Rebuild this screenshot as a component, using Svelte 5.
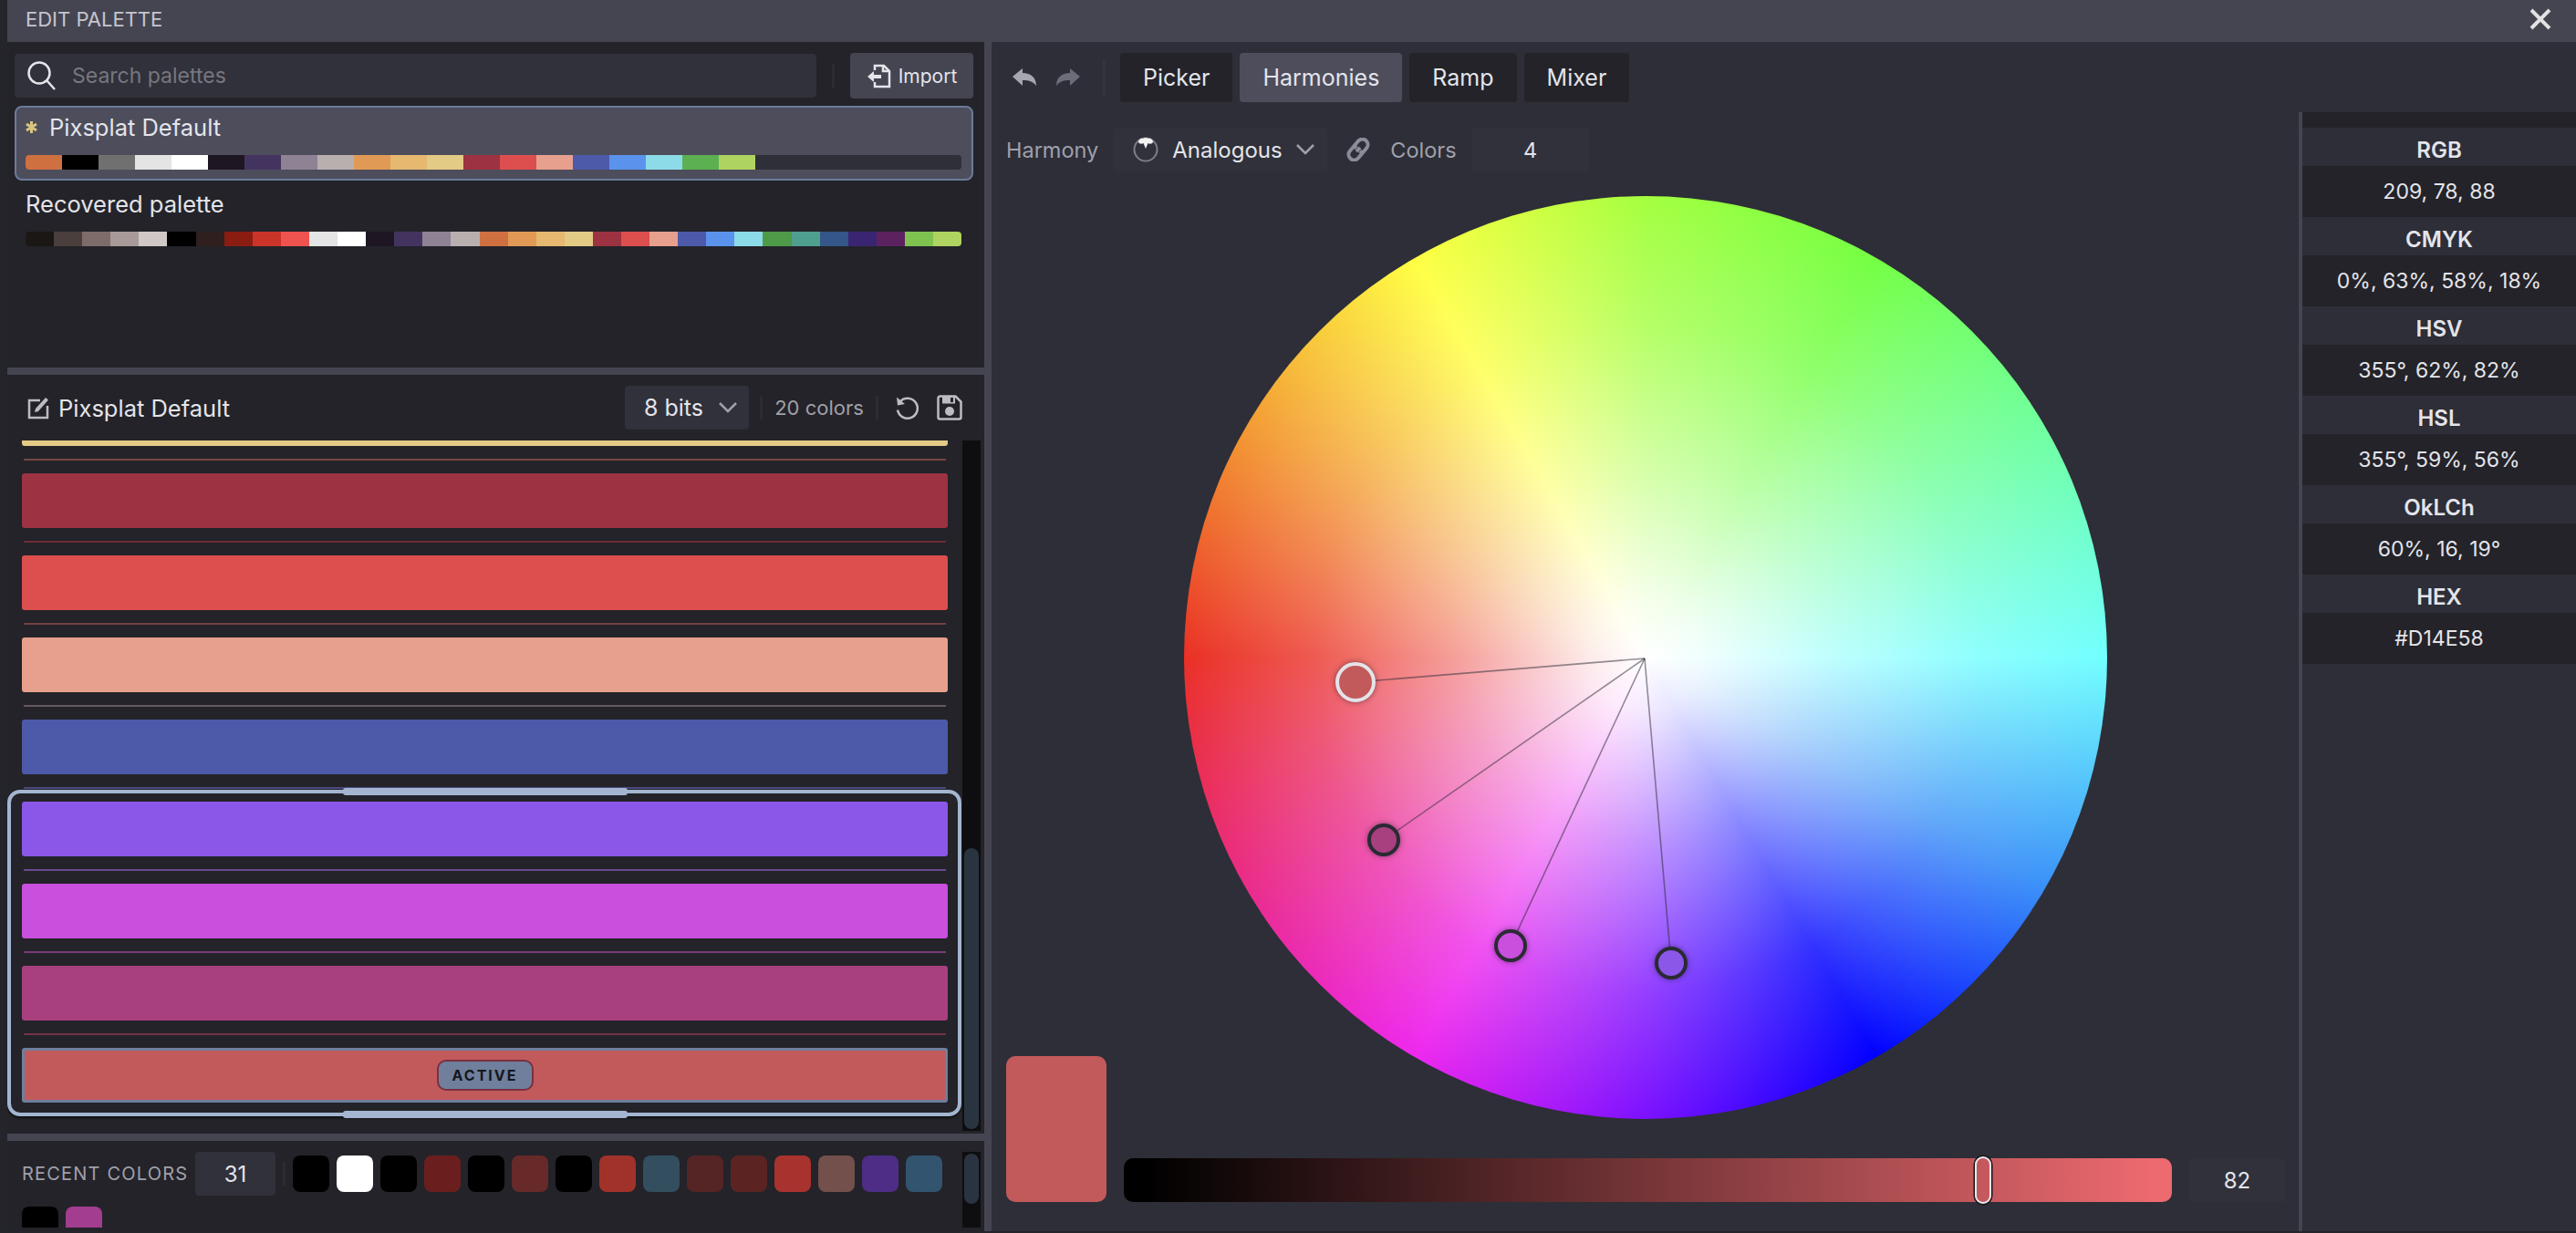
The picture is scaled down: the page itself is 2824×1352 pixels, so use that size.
<script>
	const defaultPalette = ['#cf7040', '#000000', '#707070', '#e4e4e4', '#ffffff', '#1e1622', '#43345f', '#8e8394', '#b9afaf', '#e09a55', '#e6b870', '#e3ca85', '#9c3242', '#dc4f4e', '#e7a08d', '#4d5aa9', '#5b93ec', '#8cdbe8', '#5cb051', '#afd360'];
	const recovered = ['#1a1715', '#4a3f3c', '#7d6c6a', '#a89a98', '#cfc8c6', '#000000', '#2f1f1e', '#8b1c12', '#cb3428', '#ee5350', '#e4e4e4', '#ffffff', '#1e1622', '#43345f', '#8e8394', '#b9afaf', '#cf7040', '#e09a55', '#e6b870', '#e3ca85', '#9c3242', '#dc4f4e', '#e7a08d', '#4d5aa9', '#5b93ec', '#8cdbe8', '#4f9a49', '#4f9f8f', '#345688', '#3a2573', '#5c2260', '#7fc250', '#afd360'];
	const rows = [
		{ color: '#e3ca85', line: '#74463f' },
		{ color: '#9c3242', line: '#6e2c35' },
		{ color: '#dc4f4e', line: '#74403f' },
		{ color: '#e7a08d', line: '#65585f' },
		{ color: '#4d5aa9', line: '#4a4a80' },
		{ color: '#8b57e8', line: '#6a4a90' },
		{ color: '#c94fdd', line: '#7c3a78' },
		{ color: '#a84080', line: '#733246' },
		{ color: '#c25a5c', active: true }
	];
	const recent = ['#000000', '#ffffff', '#000000', '#6a1f1e', '#000000', '#672a29', '#000000', '#a0322a', '#334e5e', '#542524', '#5b2423', '#a8322e', '#73504c', '#4d2d85', '#32546f', '#000000', '#a33d8f'];
	const tabs = ['Picker', 'Harmonies', 'Ramp', 'Mixer'];
	const center = { x: 505, y: 507 };
	const markers = [
		{ x: 219, y: 706, fill: '#a84080' },
		{ x: 358, y: 822, fill: '#c94fdd' },
		{ x: 534, y: 841, fill: '#8b57e8' },
		{ x: 188, y: 533, fill: '#c25a5c', active: true }
	];
	const values = [
		['RGB', '209, 78, 88'],
		['CMYK', '0%, 63%, 58%, 18%'],
		['HSV', '355°, 62%, 82%'],
		['HSL', '355°, 59%, 56%'],
		['OkLCh', '60%, 16, 19°'],
		['HEX', '#D14E58']
	];
</script>

<div class="window">
	<header class="titlebar">
		<span>EDIT PALETTE</span>
		<svg class="close" width="24" height="24" viewBox="0 0 24 24"><path d="M2 2 22 22M22 2 2 22" /></svg>
	</header>

	<div class="main">
		<div class="left">
			<section class="library">
				<div class="search-row">
					<div class="search">
						<svg width="34" height="34" viewBox="0 0 34 34" class="line-icon"><circle cx="14" cy="14" r="11.5" /><path d="M22.5 22.5 31 32" /></svg>
						<span>Search palettes</span>
					</div>
					<i class="sep"></i>
					<button class="import">
						<svg width="28" height="28" viewBox="0 0 28 28" class="line-icon"><path d="M9 8V3h10l6 6v17H9v-5" /><path d="M18 3v6h7" /><path class="solid" d="M1 15l7-6v4h8v4H8v4z" /></svg>
						Import
					</button>
				</div>
				<div class="palette selected">
					<div class="palette-name">
						<svg width="13" height="15" viewBox="0 0 13 15" class="star"><path d="M6.5 1v13M1 4l11 7M12 4 1 11" /></svg>
						Pixsplat Default
					</div>
					<div class="strip">
						{#each defaultPalette as color}
							<span class="cell fixed" style="background:{color}"></span>
						{/each}
					</div>
				</div>
				<div class="palette">
					<div class="palette-name">Recovered palette</div>
					<div class="strip">
						{#each recovered as color}
							<span class="cell" style="background:{color}"></span>
						{/each}
					</div>
				</div>
			</section>

			<section class="editor">
				<div class="editor-head">
					<svg width="24" height="26" viewBox="0 0 24 26" class="line-icon small"><path d="M14 5H2v19h20V11" /><path class="solid" d="M9 14 20 2l3 2.5L12 17l-4 1z" /></svg>
					<span class="editor-name">Pixsplat Default</span>
					<div class="select bits">8 bits
						<svg width="20" height="12" viewBox="0 0 20 12" class="chevron"><path d="M1 1l9 9 9-9" /></svg>
					</div>
					<i class="sep"></i>
					<span class="count">20 colors</span>
					<i class="sep"></i>
					<svg width="26" height="26" viewBox="0 0 26 26" class="line-icon small reset"><path d="M5.5 6.5a11 11 0 1 1-2.5 9" /><path class="solid" d="M2 1.5 3 10.5l8-1.5z" /></svg>
					<svg width="28" height="28" viewBox="0 0 28 28" class="line-icon small save"><path d="M3.5 1.5h17l6 6v17a2 2 0 0 1-2 2h-21a2 2 0 0 1-2-2v-21a2 2 0 0 1 2-2z" /><path class="solid" d="M6 1.5h14v8H6z" /><path class="notch" d="M15 3h3v5h-3z" /><circle class="solid" cx="14" cy="18" r="5" /></svg>
				</div>
				<div class="list-wrap">
					<div class="list">
						<div class="rows">
							{#each rows as row}
								<div class="swatch" class:active={row.active} style="background:{row.color}">
									{#if row.active}<span class="badge">ACTIVE</span>{/if}
								</div>
								{#if row.line}<div class="row-line" style="background:{row.line}"></div>{/if}
							{/each}
						</div>
						<div class="selection">
							<i class="handle top"></i>
							<i class="handle bottom"></i>
						</div>
					</div>
					<div class="scroll"><i class="thumb"></i></div>
				</div>
			</section>

			<section class="recent">
				<div class="recent-items">
					<span class="recent-label">RECENT COLORS</span>
					<span class="recent-input">31</span>
					<i class="sep"></i>
					{#each recent as color}
						<span class="recent-swatch" style="background:{color}"></span>
					{/each}
				</div>
				<div class="scroll recent-scroll"><i class="thumb"></i></div>
			</section>
		</div>

		<div class="right">
			<div class="toolbar">
				<svg width="26" height="20" viewBox="0 0 26 20" class="arrow"><path d="M0 9 11 0v5c9 0 15 5 15 14-4-5-8-6-15-6v6z" /></svg>
				<svg width="26" height="20" viewBox="0 0 26 20" class="arrow redo"><path d="M26 9 15 0v5C6 5 0 10 0 19c4-5 8-6 15-6v6z" /></svg>
				<i class="sep"></i>
				<div class="tabs">
					{#each tabs as tab}
						<button class="tab" class:on={tab === 'Harmonies'}>{tab}</button>
					{/each}
				</div>
			</div>

			<div class="body">
				<div class="center">
					<div class="options">
						<span class="opt-label">Harmony</span>
						<div class="select harmony">
							<svg width="28" height="28" viewBox="0 0 28 28" class="harmony-icon"><circle cx="14" cy="14" r="12.5" /><path class="blob" d="M6 6c0-3 3-5 5-4 2-1.5 4-1.5 6 0 2-1 5 1 5 4-1 2-4 2-5.5 1L14 13l-2.5-6C10 8 7 8 6 6z" /></svg>
							Analogous
							<svg width="20" height="12" viewBox="0 0 20 12" class="chevron"><path d="M1 1l9 9 9-9" /></svg>
						</div>
						<svg width="26" height="26" viewBox="0 0 26 26" class="link"><g transform="translate(13 13) rotate(40)"><rect x="-6" y="-13" width="12" height="26" rx="6" /><path d="M-6 0h3.5M6 0H2.5" /><path d="M0-3v6" /></g></svg>
						<span class="opt-label colors">Colors</span>
						<span class="opt-input">4</span>
					</div>

					<div class="wheel">
						<svg width="1012" height="1012" viewBox="0 0 1012 1012">
							{#each markers as m}
								<line x1={center.x} y1={center.y} x2={m.x} y2={m.y} class="spoke" />
							{/each}
							{#each markers as m}
								<circle cx={m.x} cy={m.y} r={m.active ? 20 : 16} fill={m.fill} class="marker" class:active={m.active} />
							{/each}
						</svg>
					</div>

					<div class="value-row">
						<div class="preview"></div>
						<div class="slider"><i class="slider-thumb"></i></div>
						<span class="slider-num">82</span>
					</div>
				</div>

				<aside class="values">
					{#each values as [label, value]}
						<div class="value-label">{label}</div>
						<div class="value-text">{value}</div>
					{/each}
				</aside>
			</div>
		</div>
	</div>
</div>

<style>
	:global(body) {
		background: #24242b;
		overflow: hidden;
	}

	.window {
		margin-left: 8px;
		width: 2816px;
		height: 1350px;
		display: flex;
		flex-direction: column;
		font-family: Inter, "Liberation Sans", sans-serif;
		color: #e4e4ea;
		background: #454552;
	}

	i {
		display: block;
	}

	button {
		font: inherit;
		border: 0;
		color: inherit;
	}

	svg {
		display: block;
		flex: none;
	}

	.titlebar {
		height: 46px;
		flex: none;
		display: flex;
		align-items: center;
		justify-content: space-between;
		padding: 0 27px 5px 20px;
		box-sizing: border-box;
		font-size: 22px;
		color: #c6c6ce;
	}

	.close path {
		stroke: #e2e2e2;
		stroke-width: 4;
		fill: none;
	}

	.main {
		flex: 1;
		display: flex;
		gap: 8px;
		min-height: 0;
	}

	.left {
		width: 1071px;
		flex: none;
		display: flex;
		flex-direction: column;
		gap: 8px;
	}

	.line-icon {
		fill: none;
		stroke: #e4e4ea;
		stroke-width: 2.5;
	}

	.line-icon .solid {
		fill: #e4e4ea;
		stroke: none;
	}

	.line-icon.small {
		stroke: #bcbcc2;
	}

	.line-icon.small .solid {
		fill: #bcbcc2;
	}

	.line-icon .notch {
		fill: #232329;
		stroke: none;
	}

	.sep {
		width: 3px;
		height: 26px;
		background: #2b2c34;
		flex: none;
	}

	.library {
		height: 357px;
		flex: none;
		background: #232329;
		padding: 12px 12px 0 8px;
		box-sizing: border-box;
	}

	.search-row {
		display: flex;
		align-items: center;
		height: 50px;
		margin-bottom: 8px;
	}

	.search {
		width: 879px;
		height: 48px;
		display: flex;
		align-items: center;
		gap: 16px;
		padding-left: 13px;
		box-sizing: border-box;
		background: #30313a;
		border-radius: 4px;
		font-size: 23px;
		color: #77777f;
	}

	.search-row .sep {
		margin: 0 17px 0 17px;
	}

	.import {
		width: 135px;
		height: 50px;
		display: flex;
		align-items: center;
		justify-content: center;
		gap: 7px;
		padding: 0;
		background: #454552;
		border-radius: 4px;
		font-size: 21px;
	}

	.palette {
		width: 1051px;
		height: 82px;
		box-sizing: border-box;
		border: 2px solid transparent;
		border-radius: 8px;
		padding: 0 11px 0 10px;
		margin-bottom: 2px;
	}

	.palette.selected {
		background: #4d4d5c;
		border-color: #6b7b9b;
	}

	.palette-name {
		height: 52px;
		display: flex;
		align-items: center;
		gap: 13px;
		font-size: 25.5px;
		padding-bottom: 10px;
		box-sizing: border-box;
	}

	.star {
		fill: none;
		stroke: #d9c47f;
		stroke-width: 3;
	}

	.strip {
		height: 16px;
		display: flex;
		background: #2e2f38;
		border-radius: 4px;
		overflow: hidden;
	}

	.cell {
		flex: 1;
	}

	.cell.fixed {
		flex: none;
		width: 40px;
	}

	.editor {
		height: 832px;
		flex: none;
		background: #232329;
		display: flex;
		flex-direction: column;
	}

	.editor-head {
		height: 72px;
		flex: none;
		display: flex;
		align-items: center;
		padding: 0 24px 0 22px;
		font-size: 25.5px;
	}

	.editor-name {
		margin-left: 10px;
		flex: 1;
	}

	.select {
		height: 48px;
		display: flex;
		align-items: center;
		background: #30313a;
		border-radius: 4px;
		box-sizing: border-box;
	}

	.bits {
		width: 136px;
		padding: 0 13px 0 21px;
		justify-content: space-between;
		font-size: 25px;
	}

	.chevron {
		fill: none;
		stroke: #a0a0a8;
		stroke-width: 2.5;
	}

	.editor-head .sep {
		margin: 0 12px;
	}

	.count {
		font-size: 22px;
		color: #a0a0a8;
		width: 100px;
		text-align: center;
		white-space: nowrap;
	}

	.reset {
		margin-left: 6px;
	}

	.save {
		margin-left: 20px;
	}

	.list-wrap {
		flex: 1;
		display: flex;
		min-height: 0;
		padding-bottom: 3px;
	}

	.list {
		width: 1047px;
		position: relative;
		overflow: hidden;
	}

	.rows {
		margin-top: -54px;
		padding-left: 16px;
		width: 1015px;
	}

	.swatch {
		height: 60px;
		border-radius: 3px;
		display: flex;
		align-items: center;
		justify-content: center;
		box-sizing: border-box;
	}

	.swatch.active {
		border: 3px solid #6f7f9c;
	}

	.row-line {
		height: 2px;
		margin: 14px 2px;
	}

	.badge {
		width: 106px;
		height: 34px;
		box-sizing: border-box;
		display: flex;
		align-items: center;
		justify-content: center;
		background: #6f7f9c;
		border: 2px solid #7a3040;
		border-radius: 10px;
		color: #16161c;
		font-size: 16px;
		font-weight: 700;
		letter-spacing: 2px;
	}

	.selection {
		position: absolute;
		left: 0;
		top: 383px;
		width: 1046px;
		height: 358px;
		box-sizing: border-box;
		border: 4px solid #a3b5d0;
		border-radius: 14px;
		box-shadow: 0 2px 2px #111;
	}

	.handle {
		position: absolute;
		left: 364px;
		width: 312px;
		height: 8px;
		border-radius: 3px;
		background: #a3b5d0;
	}

	.handle.top {
		top: -6px;
	}

	.handle.bottom {
		bottom: -6px;
	}

	.scroll {
		width: 20px;
		background: #0e0e10;
		position: relative;
		flex: none;
	}

	.thumb {
		position: absolute;
		left: 2px;
		right: 2px;
		top: 447px;
		bottom: 2px;
		background: #2a3440;
		border-radius: 8px;
	}

	.recent {
		flex: 1;
		min-height: 0;
		background: #232329;
		display: flex;
		padding: 12px 0 4px 16px;
		box-sizing: border-box;
	}

	.recent-items {
		width: 1031px;
		display: flex;
		flex-wrap: wrap;
		align-items: center;
		align-content: flex-start;
		gap: 12px 8px;
		overflow: hidden;
		height: 83px;
	}

	.recent-label {
		width: 182px;
		font-size: 20px;
		letter-spacing: 1.2px;
		color: #a0a0ac;
		white-space: nowrap;
	}

	.recent-input {
		width: 88px;
		height: 48px;
		display: flex;
		align-items: center;
		justify-content: center;
		background: #30313a;
		border-radius: 4px;
		font-size: 24px;
	}

	.recent-swatch {
		width: 40px;
		height: 40px;
		border-radius: 8px;
	}

	.recent-scroll .thumb {
		top: 2px;
		bottom: 26px;
	}

	.right {
		flex: 1;
		background: #2d2e37;
		display: flex;
		flex-direction: column;
		min-width: 0;
	}

	.toolbar {
		height: 77px;
		flex: none;
		display: flex;
		align-items: center;
		padding: 0 0 0 23px;
		box-sizing: border-box;
		gap: 22px;
	}

	.arrow {
		fill: #a6a6b0;
	}

	.arrow.redo {
		fill: #6d6d7a;
	}

	.toolbar .sep {
		margin: 0 0 0 3px;
		height: 40px;
		background: #33343d;
	}

	.tabs {
		display: flex;
		gap: 8px;
		margin-left: -6px;
	}

	.tab {
		height: 54px;
		padding: 0 25px;
		background: #232329;
		border-radius: 4px;
		font-size: 25px;
	}

	.tab.on {
		background: #4d4d5c;
	}

	.body {
		flex: 1;
		display: flex;
		min-height: 0;
	}

	.center {
		flex: 1;
		padding: 17px 15px 0 16px;
		display: flex;
		flex-direction: column;
		align-items: center;
		min-width: 0;
	}

	.options {
		width: 100%;
		height: 48px;
		flex: none;
		display: flex;
		align-items: center;
		font-size: 23.5px;
	}

	.opt-label {
		color: #a0a0ac;
	}

	.harmony {
		width: 235px;
		margin-left: 16px;
		padding: 0 14px 0 22px;
		gap: 15px;
		font-size: 24px;
	}

	.harmony .chevron {
		margin-left: auto;
	}

	.harmony-icon circle {
		fill: none;
		stroke: #7d7d88;
		stroke-width: 2;
	}

	.blob {
		fill: #f2f2f2;
	}

	.link {
		margin-left: 21px;
		fill: none;
		stroke: #8c8c98;
		stroke-width: 4;
	}

	.colors {
		margin-left: 22px;
	}

	.opt-input {
		width: 128px;
		height: 48px;
		margin-left: 17px;
		display: flex;
		align-items: center;
		justify-content: center;
		background: #30313a;
		border-radius: 4px;
	}

	.wheel {
		width: 1012px;
		height: 1012px;
		flex: none;
		margin-top: 27px;
		border-radius: 50%;
		background:
			radial-gradient(circle closest-side, #fff 0%, rgba(255, 255, 255, 0.9) 12%, rgba(255, 255, 255, 0.55) 40%, rgba(255, 255, 255, 0.2) 72%, rgba(255, 255, 255, 0) 100%),
			conic-gradient(#a4ff40 0deg, #74ff44 30deg, #70ffa0 60deg, #72ffff 90deg, #3a90f8 120deg, #0000ff 150deg, #7c10ff 180deg, #ee28ee 210deg, #ea2c8a 240deg, #ea3025 270deg, #f39a34 300deg, #ffff44 330deg, #a4ff40 360deg);
	}

	.spoke {
		stroke: rgba(40, 40, 50, 0.5);
		stroke-width: 1.6;
	}

	.marker {
		stroke: #2a2a33;
		stroke-width: 4;
		filter: drop-shadow(0 0 3px rgba(20, 20, 30, 0.5));
	}

	.marker.active {
		stroke: #e4e4e8;
	}

	.value-row {
		width: 100%;
		height: 160px;
		flex: none;
		margin-top: -69px;
		display: flex;
		align-items: flex-end;
		gap: 19px;
		position: relative;
		pointer-events: none;
	}

	.preview {
		width: 110px;
		height: 160px;
		background: #c25a5c;
		border-radius: 10px;
		flex: none;
	}

	.slider {
		flex: 1;
		height: 48px;
		border-radius: 10px;
		background: linear-gradient(90deg, #000 2%, #ec6a70 98%);
		position: relative;
	}

	.slider-thumb {
		position: absolute;
		left: 933px;
		top: -2px;
		width: 18px;
		height: 52px;
		box-sizing: border-box;
		border: 2px solid #e8e8ec;
		border-radius: 9px;
		background: transparent;
		box-shadow: 0 0 0 1.5px #17171c;
	}

	.slider-num {
		width: 105px;
		height: 48px;
		display: flex;
		align-items: center;
		justify-content: center;
		background: #30313a;
		border-radius: 4px;
		font-size: 24px;
		flex: none;
	}

	.values {
		width: 304px;
		flex: none;
		box-sizing: border-box;
		border-left: 4px solid #454552;
		padding-top: 17px;
		position: relative;
		background: linear-gradient(#232329 17px, #2d2e37 17px);
		text-align: center;
		font-size: 23px;
	}

	.value-label {
		height: 42px;
		line-height: 50px;
		font-weight: 600;
		font-size: 24px;
		overflow: hidden;
	}

	.value-text {
		height: 56px;
		line-height: 56px;
		background: #232329;
	}
</style>
